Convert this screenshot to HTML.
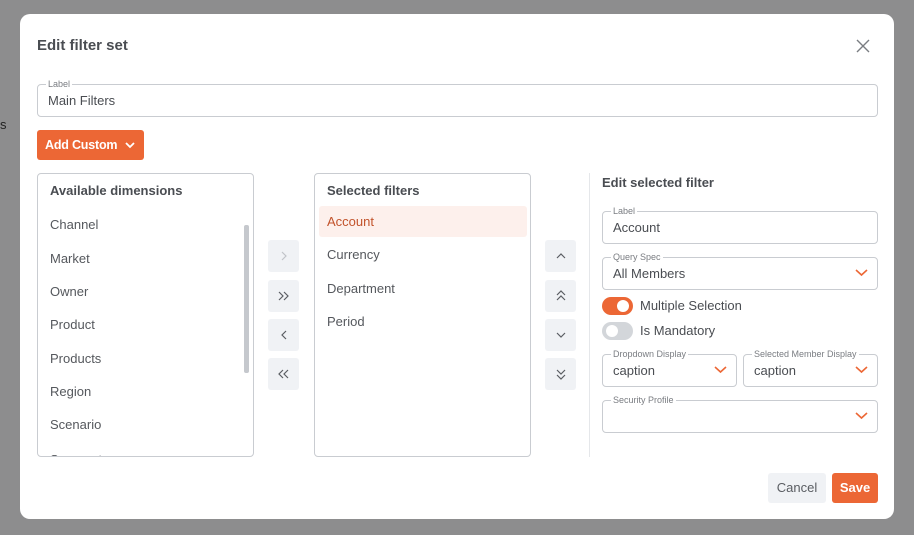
<!DOCTYPE html><html><head><style>
*{box-sizing:border-box;margin:0;padding:0}
body{width:914px;height:535px;background:#8d8d8e;font-family:"Liberation Sans",sans-serif;position:relative;overflow:hidden;color:#4a4d52}
.a{position:absolute}
.m{left:20px;top:14px;width:874px;height:505px;background:#fff;border-radius:10px}
.f{border:1px solid #c9ccd1;border-radius:4px;background:#fff}
.lb{position:absolute;top:-6px;left:8px;background:#fff;padding:0 2px;font-size:9px;color:#7a7d82;line-height:10px}
.v{position:absolute;left:10px;font-size:13px;color:#4a4d52}
.it{position:absolute;left:12px;font-size:13px;color:#55585d}
.b{position:absolute;width:31px;height:32px;background:#f0f2f5;border-radius:3px;display:flex;align-items:center;justify-content:center}
.h{font-weight:bold;font-size:13px;color:#4a4d52}
.chev{position:absolute;right:9px;top:10px}
</style></head><body>
<div class="a" style="left:0;top:117px;font-size:13px;color:#222">s</div>
<div class="a m">
</div>
<div class="a h" style="left:37px;top:37px;font-size:15px">Edit filter set</div>
<svg class="a" style="left:856px;top:39px" width="14" height="14"><path d="M1 1L13 13M13 1L1 13" stroke="#7a7d82" stroke-width="1.4"/></svg>
<div class="a f" style="left:37px;top:84px;width:841px;height:33px"><span class="lb">Label</span><span class="v" style="top:8px">Main Filters</span></div>
<div class="a" style="left:37px;top:130px;width:107px;height:30px;background:#ec6735;border-radius:3px;color:#fff;font-weight:bold;font-size:12.5px;display:flex;align-items:center;padding-left:8px;white-space:nowrap;letter-spacing:-0.2px">Add Custom<svg width="10" height="8" style="margin-left:8px"><path d="M1 2L5 6L9 2" stroke="#fff" stroke-width="1.8" fill="none"/></svg></div>
<div class="a f" style="left:37px;top:173px;width:217px;height:284px;overflow:hidden">
<div class="it h" style="top:9px">Available dimensions</div>
<div class="it" style="top:43px">Channel</div><div class="it" style="top:77px">Market</div><div class="it" style="top:110px">Owner</div><div class="it" style="top:143px">Product</div><div class="it" style="top:177px">Products</div><div class="it" style="top:210px">Region</div><div class="it" style="top:243px">Scenario</div><div class="it" style="top:278px">Segment</div>
<div class="a" style="left:206px;top:51px;width:5px;height:148px;background:#c5c8cd;border-radius:2px"></div>
</div>
<div class="b" style="left:268px;top:240px"><svg width="8" height="10"><path d="M2 1L6 5L2 9" stroke="#c0c3c8" stroke-width="1.2" fill="none"/></svg></div>
<div class="b" style="left:268px;top:280px"><svg width="12" height="10"><path d="M1 1L5 5L1 9M6 1L10 5L6 9" stroke="#5a5d62" stroke-width="1.2" fill="none"/></svg></div>
<div class="b" style="left:268px;top:319px"><svg width="8" height="10"><path d="M6 1L2 5L6 9" stroke="#5a5d62" stroke-width="1.2" fill="none"/></svg></div>
<div class="b" style="left:268px;top:358px"><svg width="12" height="10"><path d="M5 1L1 5L5 9M10 1L6 5L10 9" stroke="#5a5d62" stroke-width="1.2" fill="none"/></svg></div>
<div class="a f" style="left:314px;top:173px;width:217px;height:284px">
<div class="it h" style="top:9px">Selected filters</div>
<div class="a" style="left:4px;top:32px;width:208px;height:31px;background:#fdf0ec;border-radius:3px"></div>
<div class="it" style="top:40px;color:#c2532b">Account</div>
<div class="it" style="top:73px">Currency</div><div class="it" style="top:107px">Department</div><div class="it" style="top:140px">Period</div>
</div>
<div class="b" style="left:545px;top:240px"><svg width="10" height="8"><path d="M1 6L5 2L9 6" stroke="#5a5d62" stroke-width="1.2" fill="none"/></svg></div>
<div class="b" style="left:545px;top:280px"><svg width="10" height="12"><path d="M1 5L5 1L9 5M1 10L5 6L9 10" stroke="#5a5d62" stroke-width="1.2" fill="none"/></svg></div>
<div class="b" style="left:545px;top:319px"><svg width="10" height="8"><path d="M1 2L5 6L9 2" stroke="#5a5d62" stroke-width="1.2" fill="none"/></svg></div>
<div class="b" style="left:545px;top:358px"><svg width="10" height="12"><path d="M1 2L5 6L9 2M1 7L5 11L9 7" stroke="#5a5d62" stroke-width="1.2" fill="none"/></svg></div>
<div class="a" style="left:589px;top:173px;width:1px;height:284px;background:#e5e7ea"></div>
<div class="a h" style="left:602px;top:175px">Edit selected filter</div>
<div class="a f" style="left:602px;top:211px;width:276px;height:33px"><span class="lb">Label</span><span class="v" style="top:8px">Account</span></div>
<div class="a f" style="left:602px;top:257px;width:276px;height:33px"><span class="lb">Query Spec</span><span class="v" style="top:8px">All Members</span><svg class="chev" width="13" height="9"><path d="M1 2L6.5 7L12 2" stroke="#ec6735" stroke-width="1.6" fill="none"/></svg></div>
<div class="a" style="left:602px;top:297px;width:31px;height:18px;background:#ec6735;border-radius:9px"><div class="a" style="left:15px;top:3px;width:12px;height:12px;background:#fff;border-radius:50%"></div></div>
<div class="a" style="left:640px;top:298px;font-size:13px">Multiple Selection</div>
<div class="a" style="left:602px;top:322px;width:31px;height:18px;background:#d3d6da;border-radius:9px"><div class="a" style="left:4px;top:3px;width:12px;height:12px;background:#fff;border-radius:50%"></div></div>
<div class="a" style="left:640px;top:323px;font-size:13px">Is Mandatory</div>
<div class="a f" style="left:602px;top:354px;width:135px;height:33px"><span class="lb">Dropdown Display</span><span class="v" style="top:8px">caption</span><svg class="chev" width="13" height="9"><path d="M1 2L6.5 7L12 2" stroke="#ec6735" stroke-width="1.6" fill="none"/></svg></div>
<div class="a f" style="left:743px;top:354px;width:135px;height:33px"><span class="lb">Selected Member Display</span><span class="v" style="top:8px">caption</span><svg class="chev" width="13" height="9"><path d="M1 2L6.5 7L12 2" stroke="#ec6735" stroke-width="1.6" fill="none"/></svg></div>
<div class="a f" style="left:602px;top:400px;width:276px;height:33px"><span class="lb">Security Profile</span><svg class="chev" width="13" height="9"><path d="M1 2L6.5 7L12 2" stroke="#ec6735" stroke-width="1.6" fill="none"/></svg></div>
<div class="a" style="left:768px;top:473px;width:58px;height:30px;background:#f0f2f5;border-radius:3px;font-size:13px;color:#5a5d62;text-align:center;line-height:30px">Cancel</div>
<div class="a" style="left:832px;top:473px;width:46px;height:30px;background:#ec6735;border-radius:3px;font-size:13px;color:#fff;font-weight:bold;text-align:center;line-height:30px">Save</div>
</body></html>
